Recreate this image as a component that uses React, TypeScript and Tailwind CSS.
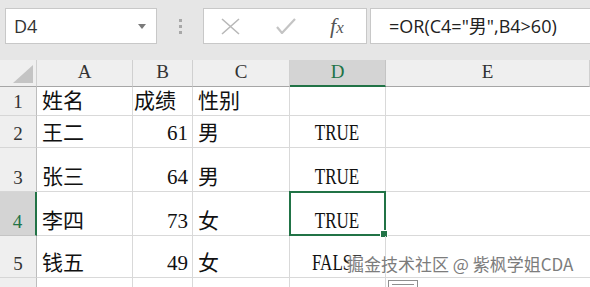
import React from "react";

const serif = "font-['Liberation_Serif','Noto_Sans_CJK_SC',serif]";

const cols = ["A", "B", "C", "D", "E"];

type Row = { n: number; a: string; b: string; c: string; d: string };

const rows: Row[] = [
  { n: 1, a: "姓名", b: "成绩", c: "性别", d: "" },
  { n: 2, a: "王二", b: "61", c: "男", d: "TRUE" },
  { n: 3, a: "张三", b: "64", c: "男", d: "TRUE" },
  { n: 4, a: "李四", b: "73", c: "女", d: "TRUE" },
  { n: 5, a: "钱五", b: "49", c: "女", d: "FALSE" },
  { n: 6, a: "", b: "", c: "", d: "" },
];

function Toolbar() {
  return (
    <div className="h-[60px] bg-[#e6e6e6] flex items-start pt-[8px] pl-[5px]">
      <div className="w-[152px] h-[36px] bg-white border border-[#c8c8c8] flex items-center justify-between pl-[8px] pr-[10px]">
        <span className="font-['Open_Sans',sans-serif] text-[18px] text-[#333]">D4</span>
        <svg width="8" height="5" viewBox="0 0 8 5">
          <path d="M0 0 L8 0 L4 5 Z" fill="#7a7a7a" />
        </svg>
      </div>
      <div className="w-[46px] h-[36px] flex flex-col items-center justify-center gap-[3px]">
        <span className="w-[3px] h-[3px] bg-[#a8a8a8]" />
        <span className="w-[3px] h-[3px] bg-[#a8a8a8]" />
        <span className="w-[3px] h-[3px] bg-[#a8a8a8]" />
      </div>
      <div className="w-[164px] h-[36px] bg-white border border-[#c8c8c8] flex items-center">
        <svg className="ml-[17px]" width="19" height="17" viewBox="0 0 19 17">
          <path d="M1 1 L18 16 M18 1 L1 16" stroke="#b8b8b8" strokeWidth="1.6" fill="none" />
        </svg>
        <svg className="ml-[36px]" width="20" height="16" viewBox="0 0 20 16">
          <path d="M1 9 L6 15 L19 1" stroke="#c4c4c4" strokeWidth="2.2" fill="none" />
        </svg>
        <span className="ml-[34px] font-['Liberation_Serif',serif] italic text-[22px] text-[#555] leading-none">
          f<span className="text-[17px]">x</span>
        </span>
      </div>
      <div className="flex-1 h-[36px] bg-white border border-r-0 border-[#c8c8c8] ml-[3px] flex items-center pl-[18px]">
        <span className="font-['Open_Sans','Noto_Sans_CJK_SC',sans-serif] text-[18px] text-[#222]">
          =OR(C4="男",B4&gt;60)
        </span>
      </div>
    </div>
  );
}

export default function App() {
  return (
    <div className="relative w-[590px] h-[287px] overflow-hidden bg-white">
      <Toolbar />
      <div className={`grid grid-cols-[37px_96px_60px_97px_96px_1fr] grid-rows-[27px_29px_32px_44px_44px_42px_30px] ${serif} text-[21px] text-[#111]`}>
        {/* header row */}
        <div className="relative bg-[#efefef] border-r border-b border-r-[#d0d0d0] border-b-[#a6a6a6]">
          <svg className="absolute left-[13px] top-[5px]" width="20" height="18" viewBox="0 0 20 18">
            <path d="M20 0 L20 18 L0 18 Z" fill="#c4c4c4" />
          </svg>
        </div>
        {cols.map((c) =>
          c === "D" ? (
            <div key={c} className="bg-[#d4d4d4] border-r border-r-[#c4c4c4] border-b-2 border-b-[#217346] flex items-end justify-center pb-[1px] text-[19px] text-[#217346] leading-[24px]">
              {c}
            </div>
          ) : (
            <div key={c} className="bg-[#efefef] border-r border-r-[#d0d0d0] border-b border-b-[#a6a6a6] flex items-end justify-center pb-[2px] text-[19px] text-[#333] leading-[24px]">
              {c}
            </div>
          )
        )}
        {rows.map((r) => (
          <React.Fragment key={r.n}>
            {r.n === 4 ? (
              <div className="bg-[#d4d4d4] border-r-2 border-r-[#217346] border-b border-b-[#c4c4c4] flex items-end justify-center pb-[1px] text-[19px] text-[#217346] leading-[24px]">
                {r.n}
              </div>
            ) : (
              <div className="bg-[#efefef] border-r border-r-[#bdbdbd] border-b border-b-[#d6d6d6] flex items-end justify-center pb-[1px] text-[19px] text-[#333] leading-[24px]">
                {r.n < 6 ? r.n : ""}
              </div>
            )}
            <div className="border-r border-b border-[#d9d9d9] flex items-end pl-[5px] pb-[1px] leading-[26px]">{r.a}</div>
            <div className={`border-r border-b border-[#d9d9d9] flex items-end pb-[1px] leading-[26px] ${r.n === 1 ? "justify-start pl-[1px]" : "justify-end pr-[4px]"}`}>
              {r.b}
            </div>
            <div className="border-r border-b border-[#d9d9d9] flex items-end pl-[5px] pb-[1px] leading-[26px]">{r.c}</div>
            <div className="relative border-r border-b border-[#d9d9d9] flex items-end justify-center pb-[1px] leading-[26px]">
              {r.d && <span className="inline-block text-[23px] scale-x-[0.74]">{r.d}</span>}
              {r.n === 4 && (
                <>
                  <div className="absolute -left-px -top-px -right-px -bottom-px border-2 border-[#217346]" />
                  <div className="absolute -right-[2px] -bottom-[2px] w-[6px] h-[6px] bg-[#217346] outline outline-1 outline-white" />
                </>
              )}
            </div>
            <div className="border-b border-[#d9d9d9]" />
          </React.Fragment>
        ))}
      </div>
      <div className="absolute left-[388px] top-[280px] w-[30px] h-[14px] bg-white border border-[#8f8f8f] p-[3px]">
        <div className="h-px bg-[#8f8f8f]" />
      </div>
      <div className="absolute left-[347px] top-[254px] font-['Noto_Sans_CJK_SC',sans-serif] text-[17px] leading-[20px] text-[#7c7c7c] [text-shadow:0_0_2px_#fff,0_0_2px_#fff,0_0_3px_#fff]">
        掘金技术社区 @ 紫枫学姐CDA
      </div>
    </div>
  );
}
